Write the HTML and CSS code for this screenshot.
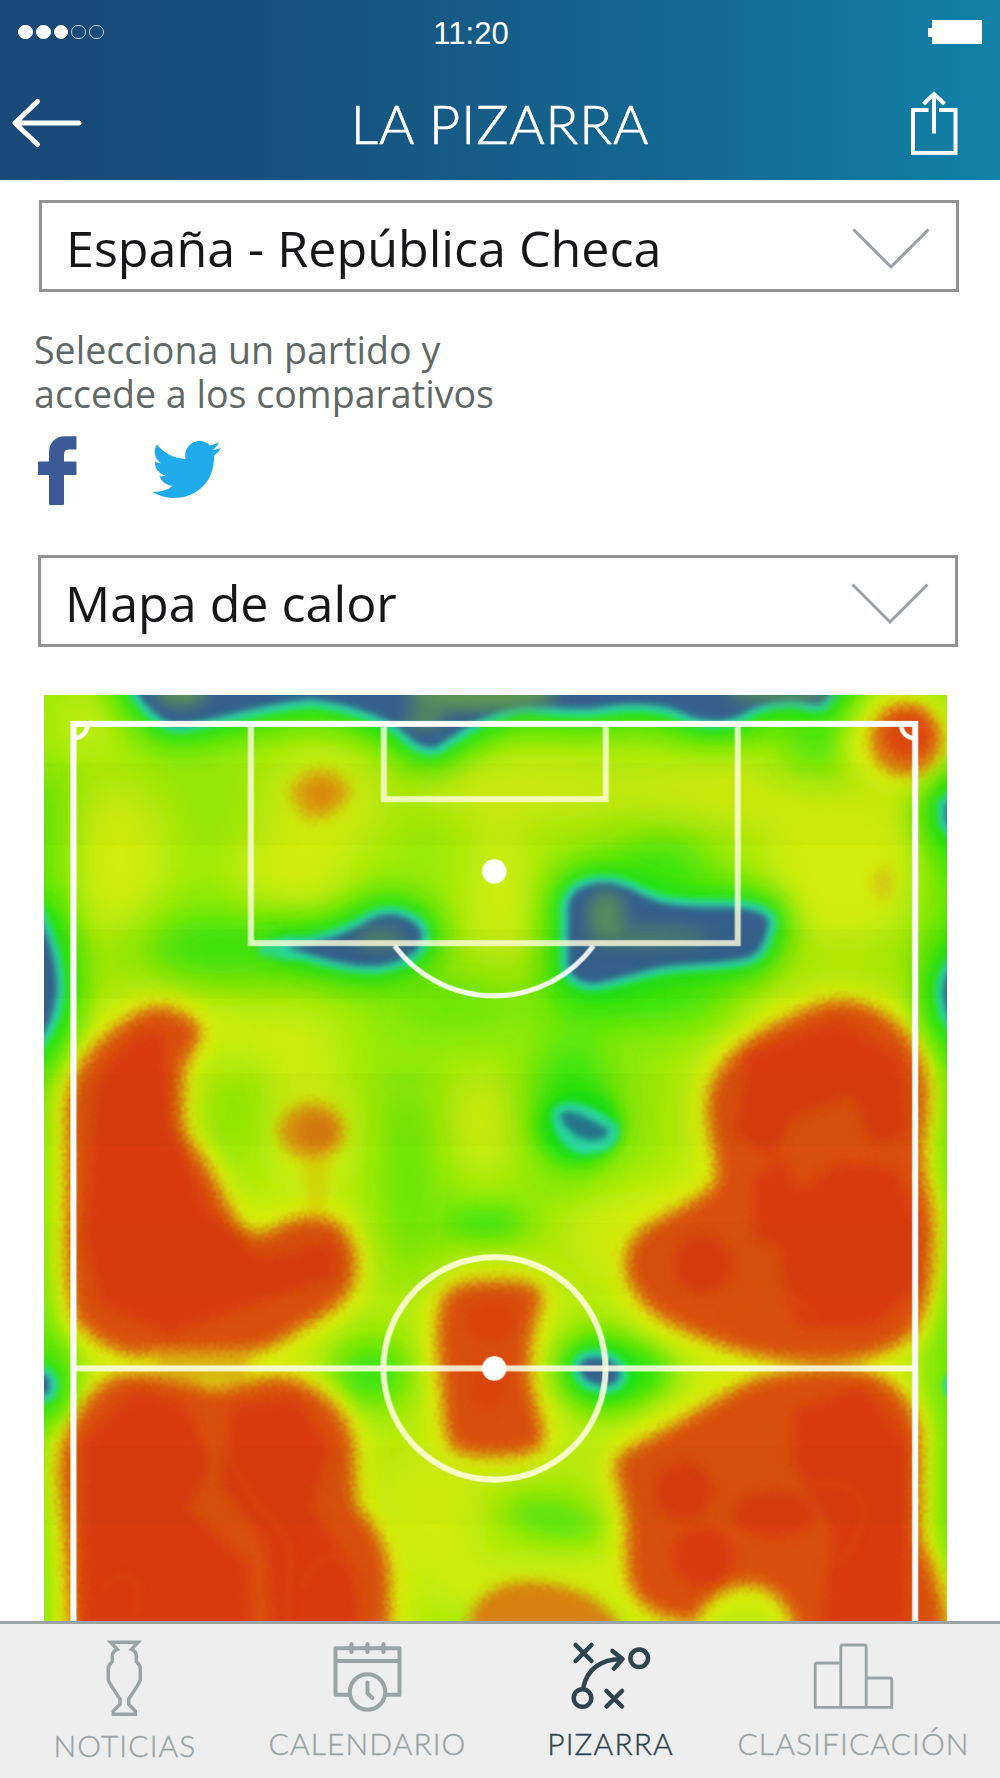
FILE: index.html
```
<!DOCTYPE html>
<html lang="es">
<head>
  <meta charset="UTF-8" />
  <title>La Pizarra</title>
  <link rel="stylesheet" href="styles.css">
</head>
<body>
  <header class="header">
    <div class="status">
      <div class="signal"><i class="on"></i><i class="on"></i><i class="on"></i><i></i><i></i></div>
      <span class="time">11:20</span>
      <svg class="battery" width="54" height="24" viewBox="0 0 54 24"><path d="M4 0h50v24H4v-7H0V8h4z" fill="#fff"/></svg>
    </div>
    <div class="navbar">
      <svg class="back" width="72" height="52" viewBox="0 0 72 52"><path d="M27.500 4.500 5 26l22.500 21.500M5 26h64"/></svg>
      <h1>LA PIZARRA</h1>
      <svg class="share" width="48" height="64" viewBox="0 0 48 64"><path d="M18.500 19H3v43h42.500V19H29M24 42.500V4M13.500 13 24 3l10.500 10"/></svg>
    </div>
  </header>

  <main class="content">
    <div class="select">
      <span>España - República Checa</span>
      <svg width="80" height="44" viewBox="0 0 80 44"><path d="M2.500 2.500 40 40 77.500 2.500"/></svg>
    </div>
    <p class="hint">Selecciona un partido y<br>accede a los comparativos</p>
    <div class="social">
      <svg class="facebook" width="39" height="69" viewBox="0 0 39 69"><path d="M38.500 1.500v11q0 1-1 1H31q-5 0-5 5V25.500h11.500q1 0 1 1V38q0 1-1 1H26v29q0 1-1 1H12q-1 0-1-1V39H1q-1 0-1-1V26.500q0-1 1-1h10V17C11 6 18 .3 27 .3h10.300q1.200 0 1.200 1.200z"/></svg>
      <svg class="twitter" width="69" height="57" viewBox="0 0 69 57"><path d="M69 7c-2 3-4 5.500-7 7.500C63 40 45 57 22 57 14 57 6 54.500 0 50.500c7 .8 15-1 20.500-5.800-6-.4-11-4-13-9.800 2 .4 4.200.3 6.200-.3C7 33 2.700 27.500 2.800 20.500c2 1 4 1.700 6.200 1.800C3 18 .7 10 4.800 3.500 12 12 22 17.500 33.600 18 31.500 8.500 38.500 0 47.500 0c4.200 0 7.800 1.700 10.300 4.500C61 3.800 64 2.700 66.800 1c-1 3.300-3.200 6-6.200 7.900C63.500 8.500 66.300 8 69 7z"/></svg>
    </div>
    <div class="select second">
      <span>Mapa de calor</span>
      <svg width="80" height="44" viewBox="0 0 80 44"><path d="M2.500 2.500 40 40 77.500 2.500"/></svg>
    </div>

    <svg class="heatmap" viewBox="38.800 613 796.600 816" preserveAspectRatio="none">
      <defs>
        <filter id="b24" filterUnits="userSpaceOnUse" x="-60" y="500" width="1000" height="1060"><feGaussianBlur stdDeviation="20"/></filter>
        <filter id="b12" filterUnits="userSpaceOnUse" x="-60" y="500" width="1000" height="1060"><feGaussianBlur stdDeviation="12"/></filter>
        <filter id="b8" filterUnits="userSpaceOnUse" x="-60" y="500" width="1000" height="1060"><feGaussianBlur stdDeviation="7"/></filter>
        <filter id="b3" filterUnits="userSpaceOnUse" x="-60" y="500" width="1000" height="1060"><feGaussianBlur stdDeviation="3"/></filter>
        <filter id="grain" filterUnits="userSpaceOnUse" x="-60" y="500" width="1000" height="1060">
          <feGaussianBlur stdDeviation="5" result="soft"/>
          <feTurbulence type="fractalNoise" baseFrequency="0.35" numOctaves="2" seed="4"/>
          <feDisplacementMap in="soft" scale="11" xChannelSelector="R" yChannelSelector="G"/>
          <feGaussianBlur stdDeviation="0.8"/>
        </filter>
        <g id="cold">
          <path d="M112 590L122 613C136 632 150 641 162 639C195 634 230 621 275 617C310 621 340 634 352 642C362 652 372 661 384 659C400 650 425 628 462 622C490 624 510 627 530 624C550 620 580 619 600 628C620 638 640 638 655 630C670 620 690 616 705 618C715 621 722 623 727 618L745 590Z"/>
          <path d="M255 834C285 832 308 822 325 812C340 802 360 806 370 818C377 832 365 844 345 849C320 856 295 848 255 836Z"/>
          <path d="M501 800C503 783 520 777 540 779C558 782 570 794 590 797C612 802 635 798 655 801C670 803 680 808 678 816C674 830 672 839 660 844C640 850 610 849 588 852C565 856 545 864 525 867C508 867 500 858 501 845Z"/>
          <path d="M30 800C42 825 50 845 50 872C49 892 42 910 30 922Z"/>
          <path d="M845 700L834 710V724L845 738Z"/>
          <path d="M845 845C828 862 828 890 845 908Z"/>
          <ellipse cx="38" cy="1221" rx="6" ry="9"/>
          <ellipse cx="529" cy="1209" rx="18" ry="12" transform="rotate(15 529 1209)"/>
        </g>
        <g id="hot">
          <path d="M118 897C130 888 145 888 155 893C172 900 179 908 172 920C160 938 158 952 160 970C157 990 162 1003 172 1015C188 1035 196 1062 208 1077C218 1090 230 1091 244 1084C262 1073 284 1071 296 1080C310 1092 316 1112 310 1130C303 1150 282 1160 262 1171C245 1185 225 1191 205 1193H120C95 1190 75 1172 67 1160C60 1130 60 1100 61 1060V980C63 940 90 915 118 897Z"/>
          <path d="M69 1250C80 1232 92 1214 115 1213C140 1211 160 1218 185 1226C210 1226 228 1214 250 1216C275 1220 298 1240 307 1262C315 1285 308 1305 314 1330C330 1345 340 1365 342 1390V1450H64C62 1400 60 1350 56 1320C52 1290 55 1270 69 1250Z"/>
          <path d="M741 884C720 885 700 897 680 907C650 922 628 945 626 975C625 1005 640 1028 630 1046C615 1062 585 1072 568 1085C553 1097 550 1115 558 1132C570 1157 595 1168 620 1178C650 1190 685 1200 720 1199C760 1200 790 1190 806 1171C820 1145 822 1110 821 1077C820 1055 812 1040 812 1015C813 990 820 970 813 945C806 915 780 885 741 884Z"/>
          <path d="M545 1297C542 1283 560 1276 580 1266C610 1250 635 1232 665 1218C700 1208 735 1205 764 1211C790 1218 805 1240 810 1265V1355C822 1385 832 1405 835 1450H705C703 1420 685 1396 660 1396C638 1396 620 1410 612 1428C590 1426 570 1420 559 1400C550 1375 558 1350 553 1330Z"/>
          <path d="M391 1148C398 1133 415 1131 435 1131C455 1130 478 1132 476 1148C468 1170 464 1195 466 1215C470 1245 484 1262 474 1275C460 1284 420 1284 403 1277C390 1265 394 1235 390 1210C387 1185 386 1165 391 1148Z"/>
        </g>
      </defs>

      <rect x="30" y="600" width="820" height="850" fill="#98ea0a"/>
      <!-- warm haze -->
      <use href="#hot" filter="url(#b24)" fill="#d2ec08" stroke="#d2ec08" stroke-width="60"/>
      <g filter="url(#b24)" fill="#d2ec08">
        <ellipse cx="105" cy="755" rx="46" ry="70"/>
        <ellipse cx="75" cy="640" rx="24" ry="30"/>
        <ellipse cx="285" cy="710" rx="58" ry="54"/>
        <ellipse cx="255" cy="770" rx="55" ry="34"/>
        <ellipse cx="470" cy="695" rx="110" ry="30"/>
        <ellipse cx="440" cy="790" rx="30" ry="72"/>
        <ellipse cx="640" cy="700" rx="100" ry="34"/>
        <ellipse cx="745" cy="760" rx="72" ry="80"/>
        <ellipse cx="220" cy="915" rx="90" ry="30"/>
        <ellipse cx="275" cy="1000" rx="50" ry="60"/>
        <ellipse cx="425" cy="990" rx="34" ry="50"/>
        <ellipse cx="560" cy="1090" rx="70" ry="40"/>
        <ellipse cx="380" cy="1330" rx="50" ry="60"/>
        <ellipse cx="480" cy="1400" rx="110" ry="34"/>
      </g>
      <!-- cool haze -->
      <g filter="url(#b24)" fill="#26e40c">
        <rect x="20" y="690" width="25" height="240"/>
        <rect x="20" y="930" width="16" height="520"/>
        <rect x="20" y="1160" width="28" height="100"/>
        <rect x="830" y="690" width="24" height="760"/>
        <ellipse cx="195" cy="835" rx="66" ry="24"/>
        <ellipse cx="585" cy="765" rx="40" ry="24"/>
        <ellipse cx="560" cy="880" rx="90" ry="20"/>
        <ellipse cx="400" cy="885" rx="60" ry="10"/>
        <ellipse cx="505" cy="975" rx="34" ry="60"/>
        <ellipse cx="325" cy="1210" rx="32" ry="20"/>
        <ellipse cx="360" cy="1040" rx="20" ry="90" opacity=".5"/>
        <ellipse cx="720" cy="655" rx="30" ry="20"/>
        <ellipse cx="200" cy="990" rx="14" ry="60" opacity=".4"/>
      </g>
      <g filter="url(#b12)" fill="#26e40c">
        <ellipse cx="428" cy="1078" rx="38" ry="12"/>
        <ellipse cx="490" cy="1340" rx="44" ry="14" opacity=".7" transform="rotate(12 490 1340)"/>
        <ellipse cx="550" cy="1210" rx="44" ry="20"/>
        <ellipse cx="330" cy="1212" rx="26" ry="18" opacity=".7"/>
      </g>
      <!-- yellow rims -->
      <use href="#hot" filter="url(#b8)" fill="#dcee08" stroke="#dcee08" stroke-width="26"/>
      <circle cx="794" cy="653" r="50" fill="#dcee08" filter="url(#b12)"/>

      <!-- cold areas -->
      <use href="#cold" filter="url(#b12)" fill="#18e010" stroke="#18e010" stroke-width="38"/>
      <ellipse cx="512" cy="993" rx="36" ry="32" fill="#18e010" filter="url(#b8)"/>
      <use href="#cold" filter="url(#b3)" fill="#2cd8a0" stroke="#2cd8a0" stroke-width="14"/>
      <g filter="url(#b3)">
        <path d="M488 978C500 964 528 976 545 992C550 1008 536 1018 512 1018C494 1012 484 994 488 978Z" fill="#2cd8a0"/>
        <path d="M494 982C504 974 522 988 537 995C538 1006 524 1008 512 1004C502 998 494 992 494 982Z" fill="#26788e"/>
        <path d="M228 830L262 826V848L228 842Z" fill="#2cd8a0" opacity=".8"/>
        <ellipse cx="836" cy="1222" rx="4" ry="10" fill="#2cd8a0"/>
      </g>
      <use href="#cold" filter="url(#b3)" fill="#36608c"/>
      <g filter="url(#b8)" fill="#5f9a50">
        <ellipse cx="160" cy="612" rx="22" ry="9"/>
        <ellipse cx="425" cy="614" rx="66" ry="12"/>
        <ellipse cx="375" cy="634" rx="18" ry="6"/>
        <ellipse cx="690" cy="610" rx="50" ry="7"/>
        <ellipse cx="535" cy="806" rx="16" ry="20" opacity=".75"/>
        <ellipse cx="570" cy="826" rx="56" ry="9" opacity=".5"/>
        <ellipse cx="335" cy="828" rx="22" ry="9" opacity=".6"/>
      </g>

      <!-- hot areas -->
      <g filter="url(#grain)">
        <use href="#hot" fill="#d9500f" stroke="#d8780f" stroke-width="7"/>
        <circle cx="799" cy="652" r="32" fill="#d9780f"/>
        <circle cx="801" cy="648" r="23" fill="#dc480e"/>
        <ellipse cx="275" cy="997" rx="29" ry="25" fill="#d8960f"/>
        <ellipse cx="280" cy="998" rx="17" ry="15" fill="#d8780f"/>
        <path d="M266 1020H292L284 1075H274Z" fill="#dcb00c" opacity=".4"/>
        <ellipse cx="779" cy="779" rx="8" ry="15" fill="#d8b80c" opacity=".7"/>
        <path d="M412 1440C415 1405 440 1394 470 1394C510 1398 535 1410 550 1440Z" fill="#d8800f"/>
        <path d="M130 1190H225L215 1218H150Z" fill="#d8a00e" opacity=".7"/>
        <path d="M256 698C262 682 280 676 292 680C306 688 312 694 308 702C300 716 286 724 272 722C262 714 258 708 256 698Z" fill="#dca80c"/>
        <ellipse cx="283" cy="700" rx="14" ry="13" fill="#dc8e0e"/>
      </g>
      <g filter="url(#grain)" fill="#d93a0c">
        <path d="M85 960C100 930 125 905 145 912L148 990L185 1070L230 1110L295 1095V1125L235 1145L150 1175L90 1150L75 1090Z"/>
        <path d="M75 1270L120 1225L165 1240L185 1290L165 1330L220 1380V1440H75Z"/>
        <path d="M205 1240L260 1232L290 1275L275 1330L315 1390V1440H240L235 1360L195 1310Z"/>
        <path d="M660 930L740 900L795 935L800 1000L770 1010L752 965L700 985L680 1020L650 1000Z"/>
        <path d="M690 1060L740 1025L790 1030L808 1070V1135L770 1170L705 1170L690 1120Z"/>
        <path d="M665 1040L690 1020L705 1050L690 1100L665 1090Z"/>
        <circle cx="620" cy="1115" r="25"/>
        <path d="M700 1245L760 1222L800 1270V1440H725L735 1350L700 1290Z"/>
        <circle cx="603" cy="1315" r="25"/>
        <ellipse cx="683" cy="1335" rx="36" ry="20"/>
        <circle cx="620" cy="1372" r="26"/>
        <ellipse cx="433" cy="1165" rx="22" ry="18" opacity=".5"/>
        <ellipse cx="430" cy="1220" rx="18" ry="24" opacity=".4"/>
      </g>
      <g filter="url(#b3)" stroke="#dd5210" fill="none" stroke-width="5" opacity=".35">
        <path d="M200 1240C195 1280 210 1310 240 1340S248 1390 256 1440M275 1310L310 1340"/>
        <path d="M90 1400C110 1380 130 1390 120 1425M265 1400C285 1360 305 1365 315 1400"/>
        <path d="M640 1160C670 1130 690 1130 720 1160M715 1310C760 1300 780 1330 740 1380"/>
      </g>

      <!-- grass bands -->
      <g fill="#205000" opacity=".02">
        <rect x="38" y="673" width="800" height="72"/>
        <rect x="38" y="819" width="800" height="62"/>
        <rect x="38" y="946" width="800" height="64"/>
        <rect x="38" y="1078" width="800" height="64"/>
        <rect x="38" y="1276" width="800" height="68"/>
      </g>

      <!-- pitch markings -->
      <g fill="none" stroke="#fff" stroke-width="5.300">
        <path d="M64.800 1440V638.500H807.300V1440"/>
        <path d="M221.300 641V831.600H650.800V641M338.600 641V704.800H534.400V641" stroke="#ffffe0" stroke-opacity=".8"/>
        <path d="M348 834A109.500 109.500 0 0 0 523.500 834" stroke-width="4.500" stroke-opacity=".9"/>
        <path d="M67 1206.400H805" stroke="#ffffe8" stroke-opacity=".86"/>
        <circle cx="436.200" cy="1206.400" r="98" stroke="#ffffe0" stroke-opacity=".88"/>
        <path d="M77 641A12 12 0 0 1 67 651M795 641A12 12 0 0 0 805 651" stroke-width="4"/>
      </g>
      <circle cx="436" cy="768.500" r="10.800" fill="#fff"/>
      <circle cx="436" cy="1206.400" r="10.800" fill="#fff"/>
    </svg>
  </main>

  <nav class="tabbar">
    <a class="tab noticias">
      <svg width="84" height="80" viewBox="0 0 84 80" stroke-width="3.500"><path d="M28.700 4.300H56L49.500 11.300Q54.300 13 54.300 18V23.700Q58.300 27 58.300 31V42Q57 46 46.700 61V66.300L53.300 73V76.300H31.300V73L38 66.300V61Q27.700 46 26.300 42V31Q26.300 27 30.300 23.700V18Q30.300 13 35.200 11.300Z"/></svg>
      <span>NOTICIAS</span>
    </a>
    <a class="tab calendario">
      <svg width="84" height="80" viewBox="0 0 84 80" stroke-width="4" stroke-linecap="round" stroke-linejoin="round"><path d="M24 56.700H10.500V10.300H74.500V56.700H61M10.500 23H74.500M26.500 6V14M42.500 6V14M58.500 6V14"/><circle cx="42.500" cy="54" r="17.700"/><path d="M42.500 44.500V55.300L47.300 60"/></svg>
      <span>CALENDARIO</span>
    </a>
    <a class="tab pizarra active">
      <svg width="84" height="80" viewBox="0 0 84 80" stroke-width="4.500" stroke-linecap="round" stroke-linejoin="round"><path d="M7.700 7 23.500 23M23.500 7 7.700 23M38.500 53 54 68.500M54 53 38.500 68.500M15.500 49C19 32 32 21 54 21M44.500 13 54.500 21 46 30.500"/><circle cx="14.500" cy="60" r="8.800"/><circle cx="71.200" cy="20.300" r="8.800"/></svg>
      <span>PIZARRA</span>
    </a>
    <a class="tab clasificacion">
      <svg width="84" height="80" viewBox="0 0 84 80" stroke-width="2.800"><path d="M4.200 69.300V27Q4.200 25 6.200 25H29.800M29.800 69.300V9Q29.800 7 31.800 7H53.200Q55.200 7 55.200 9V69.300M55.200 40H78.800Q80.800 40 80.800 42V69.300M2.800 69.300H82.200"/></svg>
      <span>CLASIFICACIÓN</span>
    </a>
  </nav>
</body>
</html>
```
FILE: styles.css
```
* { box-sizing: border-box; }
body {
  margin: 0;
  width: 1000px;
  height: 1778px;
  overflow: hidden;
  display: flex;
  flex-direction: column;
  background: #fff;
  font-family: "Open Sans", "Noto Sans", sans-serif;
}
svg { display: block; flex: none; }

.header {
  height: 179.500px;
  flex: none;
  color: #fff;
  background: linear-gradient(90deg, #194977 0%, #174f7c 25%, #155d88 50%, #136d97 75%, #1282a8 100%);
}
.status {
  height: 64px;
  padding: 0 18px;
  display: grid;
  grid-template-columns: 1fr auto 1fr;
  align-items: center;
}
.signal { display: flex; gap: 3px; }
.signal i { width: 14.800px; height: 14.800px; border: 1px solid #b9cddd; border-radius: 50%; }
.signal .on { background: #fff; border-color: #fff; }
.time { font: 31px/36px "Liberation Sans", sans-serif; margin: 3px 58px 0 0; }
.battery { justify-self: end; }
.navbar { display: flex; justify-content: space-between; align-items: center; padding: 0 42px 0 10px; height: 116px; }
.navbar svg { fill: none; stroke: #fff; }
.back { stroke-width: 5; stroke-linecap: round; stroke-linejoin: round; margin-top: 1px; }
.share { stroke-width: 4; margin-top: 2px; }
.navbar h1 { margin: 4px 0 0 8px; font: 300 54px/64px Lato, sans-serif; letter-spacing: 0.900px; -webkit-text-stroke: 0.700px #fff; }

.content { flex: 1; min-height: 0; overflow: hidden; padding: 20px 40px 0 39px; }
.select {
  height: 92px;
  width: 920px;
  border: 3px solid #939393;
  padding: 4px 25px 0 24px;
  display: flex;
  justify-content: space-between;
  align-items: center;
  font-size: 50.200px;
  line-height: 70px;
  color: #161618;
}
.select svg { fill: none; stroke: #9aa0a5; stroke-width: 3; margin-top: 3px; }
.second { margin: 50px 0 0 -1px; }
.hint { margin: 36.500px 0 0 -5px; font-size: 37.600px; line-height: 44px; color: #5f6866; }
.social { display: flex; align-items: center; gap: 75px; margin: 19.500px 0 0 -1px; }
.twitter { margin-bottom: 2px; }
.facebook { fill: #3c5a98; }
.twitter { fill: #1fabeb; }
.heatmap { width: 903px; height: 926px; margin: 48px 0 0 5px; }

.tabbar {
  height: 157px;
  flex: none;
  padding: 14px 0 0 3px;
  display: grid;
  grid-template-columns: repeat(4, 243px);
  background: #eee;
  border-top: 3.500px solid #9ba4a5;
  color: #9ba4a5;
}
.tab { display: flex; flex-direction: column; align-items: center; }
.tab svg { fill: none; stroke: currentColor; margin-left: -1px; }
.tab span { font: 300 30px/36px Lato, sans-serif; letter-spacing: 1.100px; margin-top: 7px; white-space: nowrap; -webkit-text-stroke: 0.400px currentColor; }
.noticias span { margin: 9px 0 0 1px; }
.active { color: #2e444e; }
```
